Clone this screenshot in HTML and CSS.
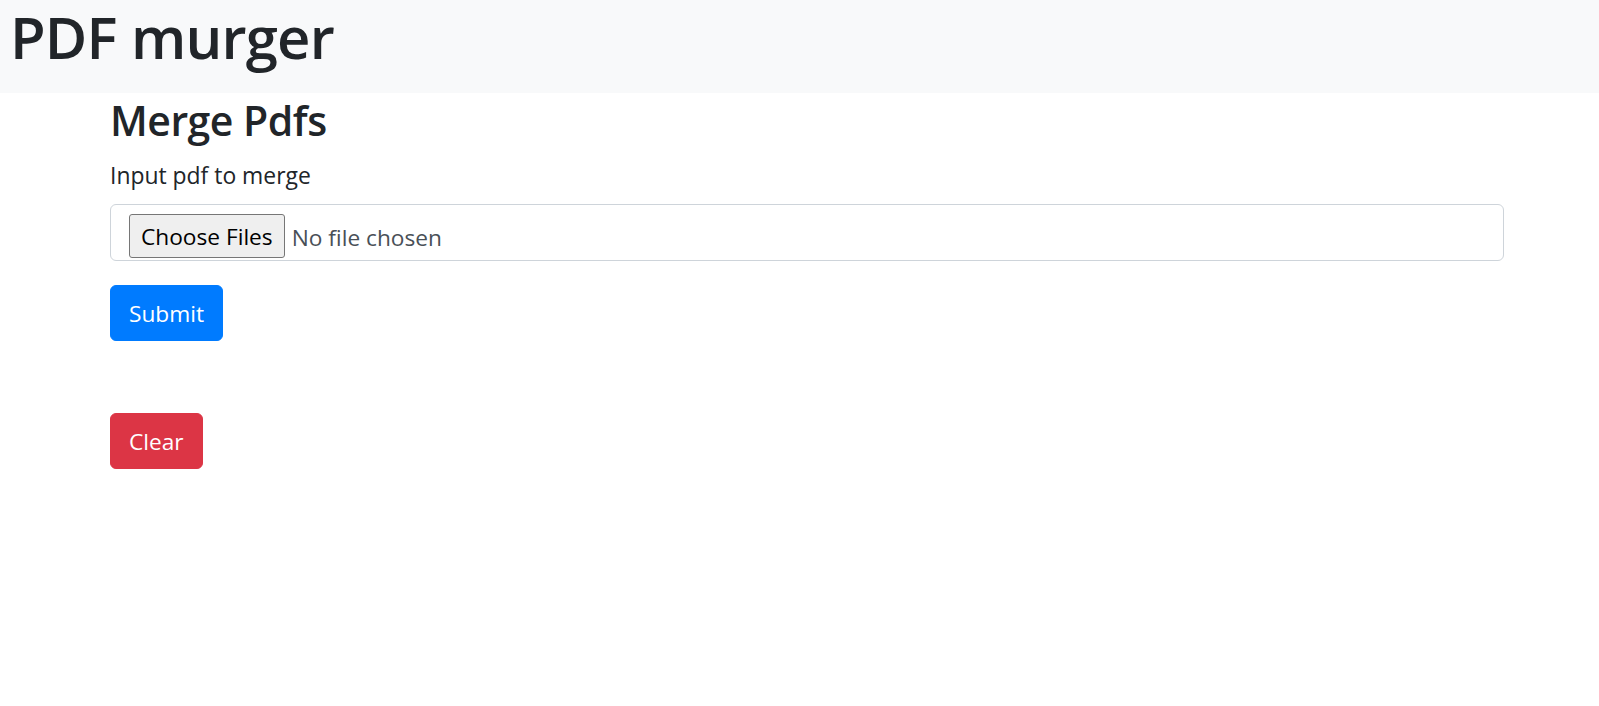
FILE: index.html
```html
<!DOCTYPE html>
<html lang="en">
<head>
<meta charset="utf-8">
<title>PDF murger</title>
<link rel="stylesheet" href="styles.css">
</head>
<body>
<header class="topbar">
  <h1 class="brand">PDF murger</h1>
</header>
<main class="container">
  <h3 class="title">Merge Pdfs</h3>
  <form class="merge-form">
    <div class="form-group">
      <label class="label">Input pdf to merge</label>
      <div class="file-control">
        <span class="file-btn">Choose Files</span>
        <span class="file-name">No file chosen</span>
      </div>
    </div>
    <button type="button" class="btn btn-primary">Submit</button>
  </form>
  <div class="clear-row">
    <button type="button" class="btn btn-danger">Clear</button>
  </div>
</main>
</body>
</html>
```

FILE: styles.css
```css
* { box-sizing: border-box; }
html, body {
  margin: 0;
  padding: 0;
  background: #ffffff;
  color: #212529;
  font-family: "Open Sans", "Noto Sans", sans-serif;
  font-size: 22.9px;
  line-height: 36px;
}
.topbar {
  background: #f8f9fa;
  padding: 0 0 19px 10px;
}
.brand {
  margin: 0;
  font-size: 58px;
  line-height: 74px;
  font-weight: 600;
  letter-spacing: -0.8px;
}
.container {
  margin: 2px 95px 0 110px;
}
.title {
  margin: 0 0 11px 0;
  font-size: 41px;
  line-height: 50px;
  font-weight: 600;
  letter-spacing: -0.5px;
}
.form-group {
  margin-bottom: 24px;
}
.label {
  display: block;
  padding-top: 2px;
  margin-bottom: 10px;
}
.file-control {
  height: 57px;
  border: 1px solid #ced4da;
  border-radius: 6px;
  padding: 9px 18px;
  display: flex;
  align-items: flex-start;
  gap: 7px;
}
.file-btn {
  display: inline-block;
  height: 44px;
  line-height: 40px;
  padding: 2px 11px 0;
  background: #efefef;
  border: 1px solid #767676;
  border-radius: 3px;
  color: #000;
  font-size: 22.7px;
}
.file-name {
  color: #495057;
  line-height: 44px;
  padding-top: 2px;
  font-size: 22.7px;
}
.btn {
  display: inline-block;
  font-family: inherit;
  font-size: 22.7px;
  line-height: 36px;
  padding: 10px 18px 8px;
  border: 1px solid transparent;
  border-radius: 6px;
  color: #fff;
  cursor: pointer;
}
.btn-primary {
  background: #007bff;
  border-color: #007bff;
}
.btn-danger {
  background: #dc3545;
  border-color: #dc3545;
}
.clear-row {
  margin-top: 72px;
}
```
